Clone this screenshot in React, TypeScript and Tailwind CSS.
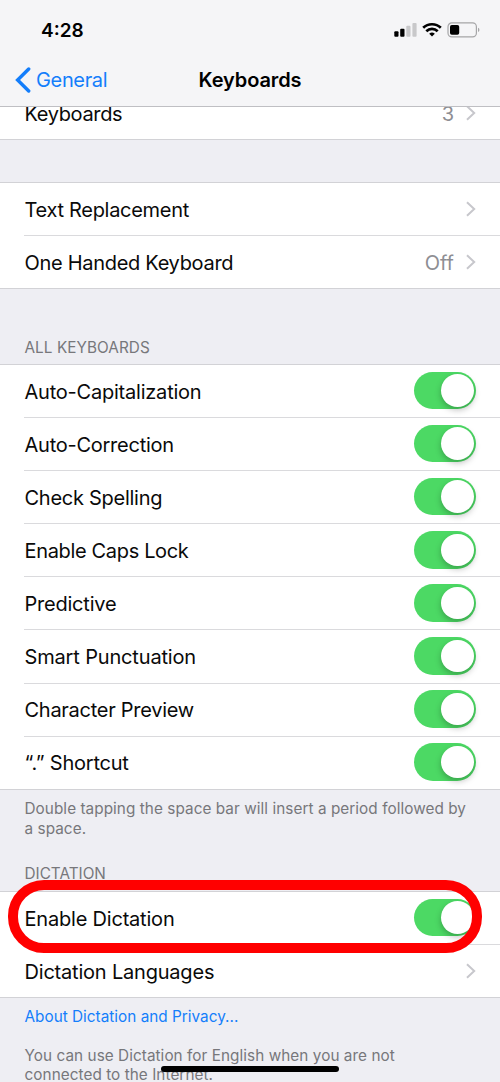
import React, { useState } from "react";

const options = [
  { label: "Auto-Capitalization", spacing: "tracking-[-0.22px]" },
  { label: "Auto-Correction", spacing: "tracking-[-0.25px]" },
  { label: "Check Spelling", spacing: "tracking-[-0.27px]" },
  { label: "Enable Caps Lock", spacing: "tracking-[-0.34px]" },
  { label: "Predictive", spacing: "tracking-[-0.22px]" },
  { label: "Smart Punctuation", spacing: "tracking-[-0.16px]" },
  { label: "Character Preview", spacing: "tracking-[-0.27px]" },
  { label: "“.” Shortcut", spacing: "tracking-[-0.22px]" },
];

const Chevron = () => (
  <svg width="10" height="16" viewBox="0 0 10 16" fill="none" className="shrink-0">
    <path d="M1 1.2L8.2 8L1 14.8" stroke="#c7c7cc" strokeWidth="2" />
  </svg>
);

const Toggle = ({ label }: { label: string }) => {
  const [on, setOn] = useState(true);
  return (
    <button
      role="switch"
      aria-checked={on}
      aria-label={label}
      onClick={() => setOn(!on)}
      className={`mb-[1px] flex h-[37.5px] w-[62px] shrink-0 items-center rounded-full px-[2.5px] ${
        on ? "justify-end bg-[#4cd964]" : "justify-start bg-[#e5e5ea]"
      }`}
    >
      <span className="h-[32.5px] w-[32.5px] rounded-full bg-white shadow-[0_3px_6px_rgba(0,0,0,0.25)]" />
    </button>
  );
};

type RowProps = {
  label: string;
  spacing?: string;
  value?: string;
  last?: boolean;
  children: React.ReactNode;
};

const Row = ({ label, spacing = "tracking-[-0.2px]", value, last, children }: RowProps) => (
  <div className="flex h-[53.1px] shrink-0 pl-6">
    <div
      className={`flex flex-1 items-center justify-between border-b pl-[0.5px] pr-6 ${
        last ? "border-transparent" : "border-[#dadadd]"
      }`}
    >
      <span className={`whitespace-nowrap pt-px text-[20px] text-[#0a0a0a] ${spacing}`}>{label}</span>
      <div className="flex items-center gap-3">
        {value && <span className="pt-px text-[20px] text-[#8e8e93]">{value}</span>}
        {children}
      </div>
    </div>
  </div>
);

const StatusIcons = () => (
  <svg width="87" height="16" viewBox="0 0 87 16">
    <rect x="0.3" y="9.3" width="4.2" height="5.5" rx="1" />
    <rect x="6.2" y="6.8" width="4.3" height="8" rx="1" />
    <rect x="12.3" y="3.8" width="4.2" height="11" rx="1" fill="#c8c8ca" />
    <rect x="18.4" y="1" width="4.2" height="13.8" rx="1" fill="#c8c8ca" />
    <g fill="none" stroke="#000" strokeWidth="2.7">
      <path d="M29.2 5.8a12.7 12.7 0 0 1 17.6 0" />
      <path d="M32.3 9.2a8.3 8.3 0 0 1 11.4 0" />
    </g>
    <path d="M38 14.6l-2.8-2.8a4 4 0 0 1 5.6 0z" />
    <rect x="54" y="0.9" width="28.4" height="14" rx="3.8" fill="none" stroke="#a5a5a7" strokeWidth="1.2" />
    <rect x="56" y="3" width="9.2" height="9.8" rx="1.8" />
    <path d="M84 5.7v4.4a2.4 2.4 0 0 0 0-4.4z" fill="#a5a5a7" />
  </svg>
);

const App = () => {
  return (
    <div className="relative flex h-[1082px] w-[500px] flex-col overflow-hidden bg-[#eeeef3] font-['Inter','Liberation_Sans',sans-serif]">
      <header className="h-[107px] shrink-0 border-b border-[#bfbfc3] bg-[#f5f5f7]">
        <div className="flex h-[60px] items-center justify-between pl-[41px] pr-[19px]">
          <span className="pt-[2px] text-[19px] font-semibold">4:28</span>
          <StatusIcons />
        </div>
        <div className="grid h-[40px] grid-cols-3 items-center">
          <button className="flex items-center gap-[5px] pl-[15px] text-[20px] text-[#147efb]">
            <svg width="16" height="26" viewBox="0 0 16 26" fill="none">
              <path d="M13.7 2L2.6 13L13.7 24" stroke="#147efb" strokeWidth="3.4" strokeLinecap="round" />
            </svg>
            <span className="tracking-[-0.35px]">General</span>
          </button>
          <h1 className="text-center text-[20px] font-semibold tracking-[-0.1px]">Keyboards</h1>
        </div>
      </header>

      <main className="flex flex-col">
        <section className="flex h-[33px] flex-col justify-end overflow-hidden border-b border-[#d2d2d6] bg-white">
          <div className="-mb-[1.5px]">
            <Row label="Keyboards" spacing="tracking-[-0.35px]" value="3" last>
              <Chevron />
            </Row>
          </div>
        </section>

        <section className="mt-[42px] h-[107px] border-y border-[#d2d2d6] bg-white">
          <Row label="Text Replacement" spacing="tracking-[-0.3px]">
            <Chevron />
          </Row>
          <Row label="One Handed Keyboard" spacing="tracking-[-0.3px]" value="Off" last>
            <Chevron />
          </Row>
        </section>

        <h2 className="mt-[49px] h-[26px] pl-[24.5px] text-[15.3px] leading-5 tracking-[0.07px] text-[#77777b]">
          ALL KEYBOARDS
        </h2>
        <section className="h-[426px] border-y border-[#d2d2d6] bg-white">
          {options.map((option, i) => (
            <Row
              key={option.label}
              label={option.label}
              spacing={option.spacing}
              last={i === options.length - 1}
            >
              <Toggle label={option.label} />
            </Row>
          ))}
        </section>

        <p className="mt-[9px] pl-[24.5px] text-[15.3px] leading-[19.5px] tracking-[0.06px] text-[#77777b]">
          Double tapping the space bar will insert a period followed by
          <br />a space.
        </p>

        <h2 className="mt-[26px] h-[27px] pl-[24.5px] text-[15.3px] leading-5 text-[#77777b]">DICTATION</h2>
        <section className="relative h-[107px] border-y border-[#d2d2d6] bg-white">
          <Row label="Enable Dictation">
            <Toggle label="Enable Dictation" />
          </Row>
          <Row label="Dictation Languages" last>
            <Chevron />
          </Row>
          {/* highlight ring around the dictation row */}
          <div className="pointer-events-none absolute left-[7.5px] top-[-12px] h-[72.5px] w-[474.7px] rounded-[36px] border-[10.7px] border-[#ff0000]" />
        </section>

        <div className="mt-[9px] pl-[24.5px] text-[15.3px] leading-[19.5px] tracking-[0.06px] text-[#77777b]">
          <a href="#" className="tracking-[0.02px] text-[#147efb]">About Dictation and Privacy...</a>
          <p className="mt-[19px]">
            You can use Dictation for English when you are not
            <br />
            connected to the Internet.
          </p>
        </div>
      </main>

      <div className="absolute left-[161px] top-[1066px] h-[6px] w-[178px] rounded-full bg-black" />
    </div>
  );
};

export default App;
